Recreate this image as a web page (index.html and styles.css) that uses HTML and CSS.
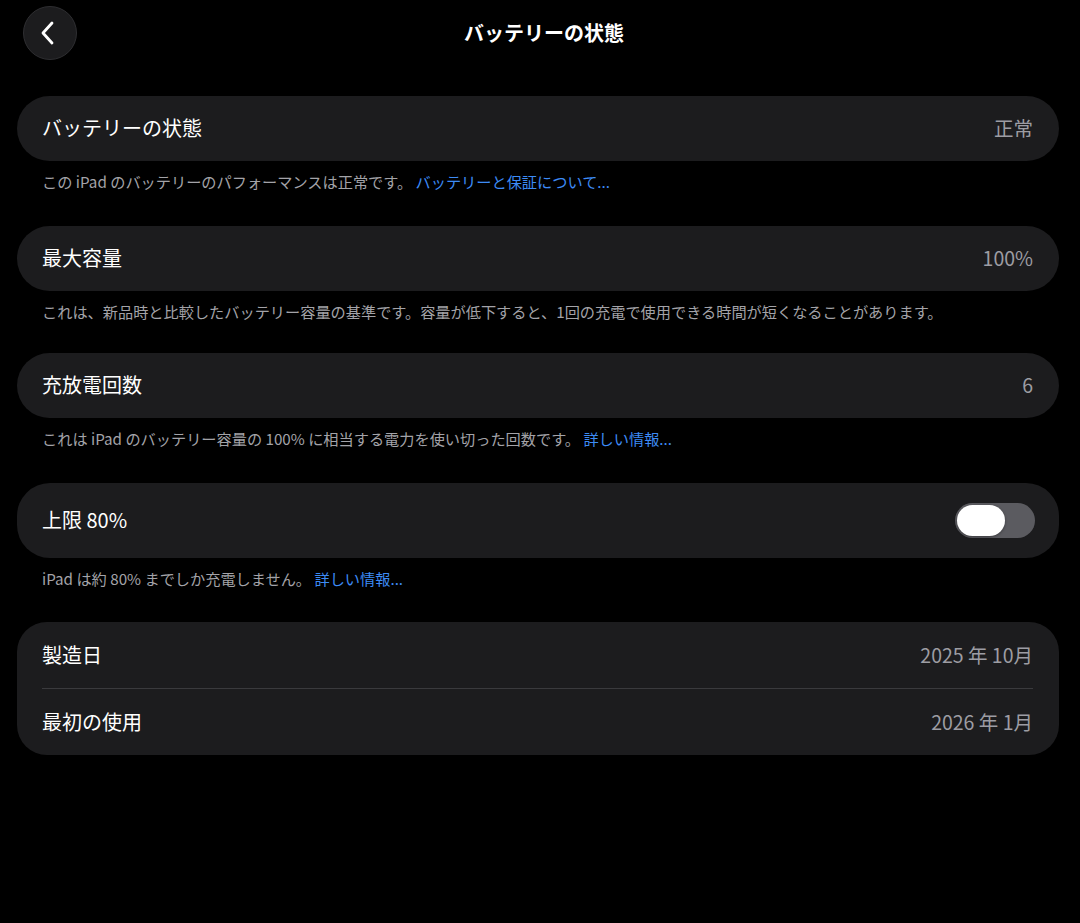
FILE: index.html
```html
<!DOCTYPE html>
<html lang="ja">
<head>
<meta charset="utf-8">
<title>バッテリーの状態</title>
<link rel="stylesheet" href="styles.css">
</head>
<body>
<header class="header">
  <button class="back" aria-label="戻る">
    <svg width="20" height="26" viewBox="0 0 20 26"><path d="M14 3 L5 13 L14 23" fill="none" stroke="#fff" stroke-width="2.8" stroke-linecap="round" stroke-linejoin="round"/></svg>
  </button>
  <h1 class="title">バッテリーの状態</h1>
</header>
<main class="content">
  <section class="card">
    <div class="row"><span class="label">バッテリーの状態</span><span class="value">正常</span></div>
  </section>
  <p class="note">この iPad のバッテリーのパフォーマンスは正常です。 <a class="link">バッテリーと保証について...</a></p>

  <section class="card">
    <div class="row"><span class="label">最大容量</span><span class="value">100%</span></div>
  </section>
  <p class="note note-short">これは、新品時と比較したバッテリー容量の基準です。容量が低下すると、1回の充電で使用できる時間が短くなることがあります。</p>

  <section class="card">
    <div class="row"><span class="label">充放電回数</span><span class="value">6</span></div>
  </section>
  <p class="note">これは iPad のバッテリー容量の 100% に相当する電力を使い切った回数です。 <a class="link">詳しい情報...</a></p>

  <section class="card">
    <div class="row row-tall"><span class="label">上限 80%</span><span class="toggle"><span class="knob"></span></span></div>
  </section>
  <p class="note note-last">iPad は約 80% までしか充電しません。 <a class="link">詳しい情報...</a></p>

  <section class="card card-group">
    <div class="row"><span class="label">製造日</span><span class="value">2025 年 10月</span></div>
    <div class="sep"></div>
    <div class="row"><span class="label">最初の使用</span><span class="value">2026 年 1月</span></div>
  </section>
</main>
</body>
</html>
```

FILE: styles.css
```css
* { box-sizing: border-box; }
html, body {
  margin: 0;
  background: #000;
  color: #fff;
  font-family: "Noto Sans CJK JP", "Noto Sans", sans-serif;
}
body { width: 1080px; height: 923px; overflow: hidden; }

.header {
  position: relative;
  height: 96px;
  display: flex;
  justify-content: center;
}
.back {
  position: absolute;
  left: 23px;
  top: 6px;
  width: 54px;
  height: 54px;
  border-radius: 50%;
  background: #1c1c1e;
  border: 1px solid #2e2e31;
  display: flex;
  align-items: center;
  justify-content: center;
  padding: 0 4px 0 0;
}
.title {
  margin: 0;
  margin-top: 19px;
  margin-left: 8px;
  height: 28px;
  line-height: 28px;
  font-size: 20px;
  font-weight: 700;
  letter-spacing: 0;
}

.content {
  padding: 0 21px 0 17px;
}
.card {
  background: #1c1c1e;
  border-radius: 33px;
  padding: 0 26px 0 25px;
}
.card-group { border-radius: 30px; }
.row {
  height: 65px;
  display: flex;
  align-items: center;
  justify-content: space-between;
}
.card-group .row { height: 66px; }
.row-tall { height: 75px; }
.label {
  font-size: 20px;
  line-height: 28px;
  margin-top: -1px;
}
.value {
  font-size: 19.5px;
  line-height: 28px;
  color: #9d9da3;
  margin-top: -1px;
}
.sep {
  height: 1px;
  background: #3a3a3d;
}
.note {
  margin: 0;
  padding: 10px 0 34px 25px;
  font-size: 15.2px;
  line-height: 21px;
  color: #a3a3a8;
}
.note-short { padding-bottom: 31px; }
.note-last { padding-bottom: 33px; }
.link { color: #3d8bf5; }

.toggle {
  width: 80px;
  height: 35px;
  border-radius: 18px;
  background: #5b5b60;
  display: flex;
  align-items: center;
  padding-left: 2px;
  margin-right: -2px;
}
.knob {
  width: 48px;
  height: 31px;
  border-radius: 16px;
  background: #fff;
  box-shadow: 0 1px 3px rgba(0,0,0,0.35);
}
```
